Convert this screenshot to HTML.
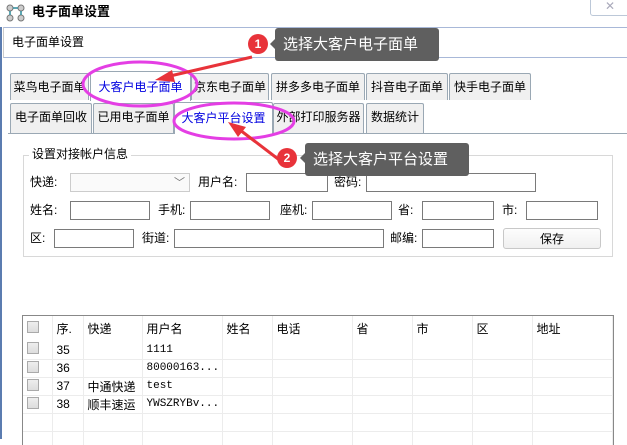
<!DOCTYPE html>
<html><head><meta charset="utf-8"><style>
*{margin:0;padding:0;box-sizing:border-box}
body{width:627px;height:439px;overflow:hidden;background:#fff;font-family:"Liberation Sans","Noto Sans CJK SC","WenQuanYi Zen Hei",sans-serif;font-size:12px;color:#000;position:relative}
.a{position:absolute}
.tab{position:absolute;height:27px;border:1px solid #9aa8b4;border-bottom:none;background:#f0f0f0;border-radius:2px 2px 0 0;font-size:12px;line-height:26px;text-align:center;white-space:nowrap;overflow:hidden}
.sel{background:#fff;color:#0000e0;z-index:2}
.lb{position:absolute;font-size:12px;line-height:19px}
.in{position:absolute;height:19px;border:1px solid #7a7a7a;background:#fff}
.tip{position:absolute;background:#5f5f5f;color:#fff;font-size:15px;line-height:33px;padding-left:8px;border-radius:3px}
.num{position:absolute;width:20px;height:20px;border-radius:50%;background:#e8333a;color:#fff;font-size:12px;font-weight:bold;text-align:center;line-height:20px;z-index:6}
table{border-collapse:collapse;font-size:12px}
td{border-right:1px solid #ececec;border-bottom:1px solid #ececec;height:18px;padding-left:4px;white-space:nowrap}
.cb{display:inline-block;width:12px;height:12px;border:1px solid #aaa;background:linear-gradient(#eee,#ddd)}
</style></head><body>
<div class="a" style="left:0;top:27px;width:2px;height:412px;background:#5b7cb0"></div>
<svg class="a" style="left:6px;top:4px" width="20" height="18"><circle cx="4" cy="4" r="3" fill="#ccc" stroke="#777"/><circle cx="15" cy="4" r="3" fill="#ccc" stroke="#777"/><circle cx="4" cy="14" r="3" fill="#ccc" stroke="#777"/><circle cx="15" cy="14" r="3" fill="#ccc" stroke="#777"/><path d="M7 4h5M4 7v4M15 7v4" stroke="#2a8a9a" stroke-width="1.5"/></svg>
<div class="a" style="left:32px;top:3px;font-size:13px;font-weight:bold;line-height:18px">电子面单设置</div>
<div class="a" style="left:590px;top:-3px;width:40px;height:19px;border:1px solid #bcc8d8;border-radius:3px;color:#aab;font-size:12px;text-align:center;line-height:16px">✕</div>
<div class="a" style="left:3px;top:27px;width:624px;height:31px;border-top:1px solid #a8b8d8;border-bottom:1px solid #a8b8d8;border-left:1px solid #ccc"></div>
<div class="a" style="left:12px;top:34px;font-size:12px;line-height:17px">电子面单设置</div>

<div class="tab" style="left:10px;top:73px;width:79px">菜鸟电子面单</div>
<div class="tab sel" style="left:90px;top:71px;width:101px;height:30px;line-height:30px">大客户电子面单</div>
<div class="tab" style="left:191px;top:73px;width:78px">京东电子面单</div>
<div class="tab" style="left:271px;top:73px;width:94px">拼多多电子面单</div>
<div class="tab" style="left:366px;top:73px;width:82px">抖音电子面单</div>
<div class="tab" style="left:449px;top:73px;width:82px">快手电子面单</div>
<div class="tab" style="left:10px;top:103px;width:82px;height:30px">电子面单回收</div>
<div class="tab" style="left:93px;top:103px;width:81px;height:30px">已用电子面单</div>
<div class="tab sel" style="left:174px;top:102px;width:99px;height:32px;line-height:30px">大客户平台设置</div>
<div class="tab" style="left:273px;top:103px;width:91px;height:30px">外部打印服务器</div>
<div class="tab" style="left:366px;top:103px;width:58px;height:30px">数据统计</div>
<div class="a" style="left:8px;top:133px;width:619px;height:1px;background:#9aa8b4"></div>

<div class="a" style="left:23px;top:155px;width:590px;height:102px;border:1px solid #d8d8d8"></div>
<div class="a" style="left:29px;top:146px;background:#fff;padding:0 3px;line-height:17px">设置对接帐户信息</div>

<div class="lb" style="left:30px;top:173px">快递:</div>
<div class="in" style="left:70px;top:173px;width:120px;border-color:#ccc;background:#fafafa"><span class="a" style="right:4px;top:0;color:#777;font-size:11px">﹀</span></div>
<div class="lb" style="left:198px;top:173px">用户名:</div><div class="in" style="left:246px;top:173px;width:82px"></div>
<div class="lb" style="left:334px;top:173px">密码:</div><div class="in" style="left:366px;top:173px;width:170px"></div>

<div class="lb" style="left:30px;top:201px">姓名:</div><div class="in" style="left:70px;top:201px;width:80px"></div>
<div class="lb" style="left:158px;top:201px">手机:</div><div class="in" style="left:190px;top:201px;width:80px"></div>
<div class="lb" style="left:280px;top:201px">座机:</div><div class="in" style="left:312px;top:201px;width:80px"></div>
<div class="lb" style="left:398px;top:201px">省:</div><div class="in" style="left:422px;top:201px;width:72px"></div>
<div class="lb" style="left:502px;top:201px">市:</div><div class="in" style="left:526px;top:201px;width:72px"></div>

<div class="lb" style="left:30px;top:229px">区:</div><div class="in" style="left:54px;top:229px;width:80px"></div>
<div class="lb" style="left:142px;top:229px">街道:</div><div class="in" style="left:174px;top:229px;width:210px"></div>
<div class="lb" style="left:390px;top:229px">邮编:</div><div class="in" style="left:422px;top:229px;width:72px"></div>
<div class="a" style="left:503px;top:228px;width:98px;height:21px;border:1px solid #c8c8c8;border-radius:3px;background:linear-gradient(#fdfdfd,#f0f0f0);text-align:center;line-height:20px">保存</div>

<div class="a" style="left:22px;top:315px;width:592px;height:130px;border:1px solid #888;border-bottom:none;overflow:hidden">
<table style="width:590px;table-layout:fixed">
<colgroup><col style="width:29px"><col style="width:31px"><col style="width:59px"><col style="width:80px"><col style="width:50px"><col style="width:80px"><col style="width:60px"><col style="width:60px"><col style="width:60px"><col></colgroup>
<tr style="height:25px"><td style="border-bottom:none;height:25px"><span class="cb"></span></td><td style="border-bottom:none">序.</td><td style="border-bottom:none">快递</td><td style="border-bottom:none">用户名</td><td style="border-bottom:none">姓名</td><td style="border-bottom:none">电话</td><td style="border-bottom:none">省</td><td style="border-bottom:none">市</td><td style="border-bottom:none">区</td><td style="border-bottom:none">地址</td></tr>
<tr><td><span class="cb"></span></td><td>35</td><td></td><td style="font-family:'Liberation Mono',monospace;font-size:11px">1111</td><td></td><td></td><td></td><td></td><td></td><td></td></tr>
<tr><td><span class="cb"></span></td><td>36</td><td></td><td style="font-family:'Liberation Mono',monospace;font-size:11px">80000163...</td><td></td><td></td><td></td><td></td><td></td><td></td></tr>
<tr><td><span class="cb"></span></td><td>37</td><td>中通快递</td><td style="font-family:'Liberation Mono',monospace;font-size:11px">test</td><td></td><td></td><td></td><td></td><td></td><td></td></tr>
<tr><td><span class="cb"></span></td><td>38</td><td>顺丰速运</td><td style="font-family:'Liberation Mono',monospace;font-size:11px">YWSZRYBv...</td><td></td><td></td><td></td><td></td><td></td><td></td></tr>
<tr><td></td><td></td><td></td><td></td><td></td><td></td><td></td><td></td><td></td><td></td></tr>
<tr><td></td><td></td><td></td><td></td><td></td><td></td><td></td><td></td><td></td><td></td></tr>
</table></div>

<svg class="a" style="left:0;top:0;z-index:5" width="627" height="439">
<ellipse cx="140" cy="84" rx="57" ry="22" fill="none" stroke="#e43ee4" stroke-width="3"/>
<ellipse cx="234" cy="121" rx="60" ry="18" fill="none" stroke="#e43ee4" stroke-width="3"/>
<path d="M252 57 L170 76" stroke="#e8333a" stroke-width="3"/><path d="M155 80 L172 70 L175 82 Z" fill="#e8333a"/>
<path d="M282 162 L240 130" stroke="#e8333a" stroke-width="3"/><path d="M228 122 L246 127 L238 137 Z" fill="#e8333a"/>
<path d="M275 39 L270 44 L275 49 Z" fill="#5f5f5f"/>
<path d="M305 153 L300 158 L305 163 Z" fill="#5f5f5f"/>
</svg>
<div class="num" style="left:248px;top:34px">1</div>
<div class="tip" style="left:275px;top:28px;width:164px;z-index:6">选择大客户电子面单</div>
<div class="num" style="left:277px;top:148px">2</div>
<div class="tip" style="left:305px;top:143px;width:164px;z-index:6">选择大客户平台设置</div>
</body></html>
